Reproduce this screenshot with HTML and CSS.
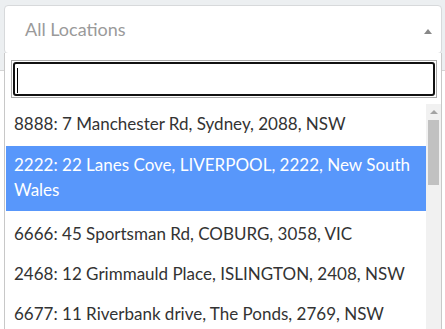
FILE: index.html
```html
<!DOCTYPE html>
<html lang="en">
    <head>
        <meta charset="UTF-8" />
        <meta name="viewport" content="width=device-width, initial-scale=1.0" />
        <title>Locations</title>

        <link rel="stylesheet" href="styles.css">
    </head>

    <body>
        <div class="container">
            <div class="select">
                <span class="placeholder">All Locations</span>
                <span class="arrow"></span>
            </div>

            <div class="dropdown">
                <div class="search">
                    <div class="search-field">
                        <span class="caret"></span>
                    </div>
                </div>

                <div class="results">
                    <ul class="options">
                        <li>8888: 7 Manchester Rd, Sydney, 2088, NSW</li>
                        <li class="highlighted">2222: 22 Lanes Cove, LIVERPOOL, 2222, New South Wales</li>
                        <li>6666: 45 Sportsman Rd, COBURG, 3058, VIC</li>
                        <li>2468: 12 Grimmauld Place, ISLINGTON, 2408, NSW</li>
                        <li>6677: 11 Riverbank drive, The Ponds, 2769, NSW</li>
                    </ul>

                    <div class="scrollbar">
                        <div class="scroll-up"></div>
                        <div class="thumb"></div>
                    </div>
                </div>
            </div>
        </div>
    </body>
</html>
```

FILE: styles.css
```css
* {
    margin: 0;
    padding: 0;
    box-sizing: border-box;
}

html,
body {
    height: 100%;
    overflow: hidden;
}

body {
    font-family: Lato, "Open Sans", sans-serif;
    background: linear-gradient(#eceff1 0 70px, #d4d4d4 70px 71px, #fff 71px);
    color: #333;
}

.container {
    padding: 5px 3px 0 4px;
}

.select {
    display: flex;
    align-items: center;
    justify-content: space-between;
    height: 49px;
    padding: 0 9px 0 20px;
    background-color: #fff;
    border: 1px solid #d7d9db;
    border-radius: 4px;
}

.placeholder {
    font-size: 18px;
    color: #9a9a9a;
    padding-bottom: 2px;
}

.arrow {
    width: 0;
    height: 0;
    border-left: 4px solid transparent;
    border-right: 4px solid transparent;
    border-bottom: 5px solid #888;
    margin-top: 4px;
}

.dropdown {
    width: 438px;
    margin-top: -1px;
    background-color: #fff;
    border: 1px solid #c8c8c8;
    border-top: none;
}

.search {
    padding: 7px 4px 5px 6px;
}

.search-field {
    height: 38px;
    border: 1px solid #aaa;
    padding: 1px;
}

.search-field .caret {
    display: block;
    height: 100%;
    border: 2px solid #111;
    border-radius: 3px;
    position: relative;
}

.search-field .caret::before {
    content: "";
    position: absolute;
    left: 2px;
    top: 4px;
    width: 1px;
    height: 25px;
    background-color: #000;
}

.results {
    display: flex;
    padding-left: 1px;
}

.options {
    flex: 1;
    list-style: none;
    font-size: 17px;
    line-height: 25px;
    color: #333;
    padding-top: 1px;
}

.options li {
    padding: 7px 8px 8px;
}

.options li:first-child {
    padding-bottom: 10px;
}

.options li.highlighted {
    padding: 6px 8px 9px;
    background-color: #5897fb;
    color: #fff;
}

.options li.highlighted + li {
    padding-top: 10px;
}

.scrollbar {
    width: 15px;
    height: 240px;
    margin-top: 1px;
    background-color: #f1f1f1;
    display: flex;
    flex-direction: column;
    align-items: center;
}

.scroll-up {
    width: 0;
    height: 0;
    margin: 6px 0 6px;
    border-left: 4px solid transparent;
    border-right: 4px solid transparent;
    border-bottom: 4px solid #a3a3a3;
}

.thumb {
    width: 11px;
    height: 65px;
    background-color: #c1c1c1;
}
```
